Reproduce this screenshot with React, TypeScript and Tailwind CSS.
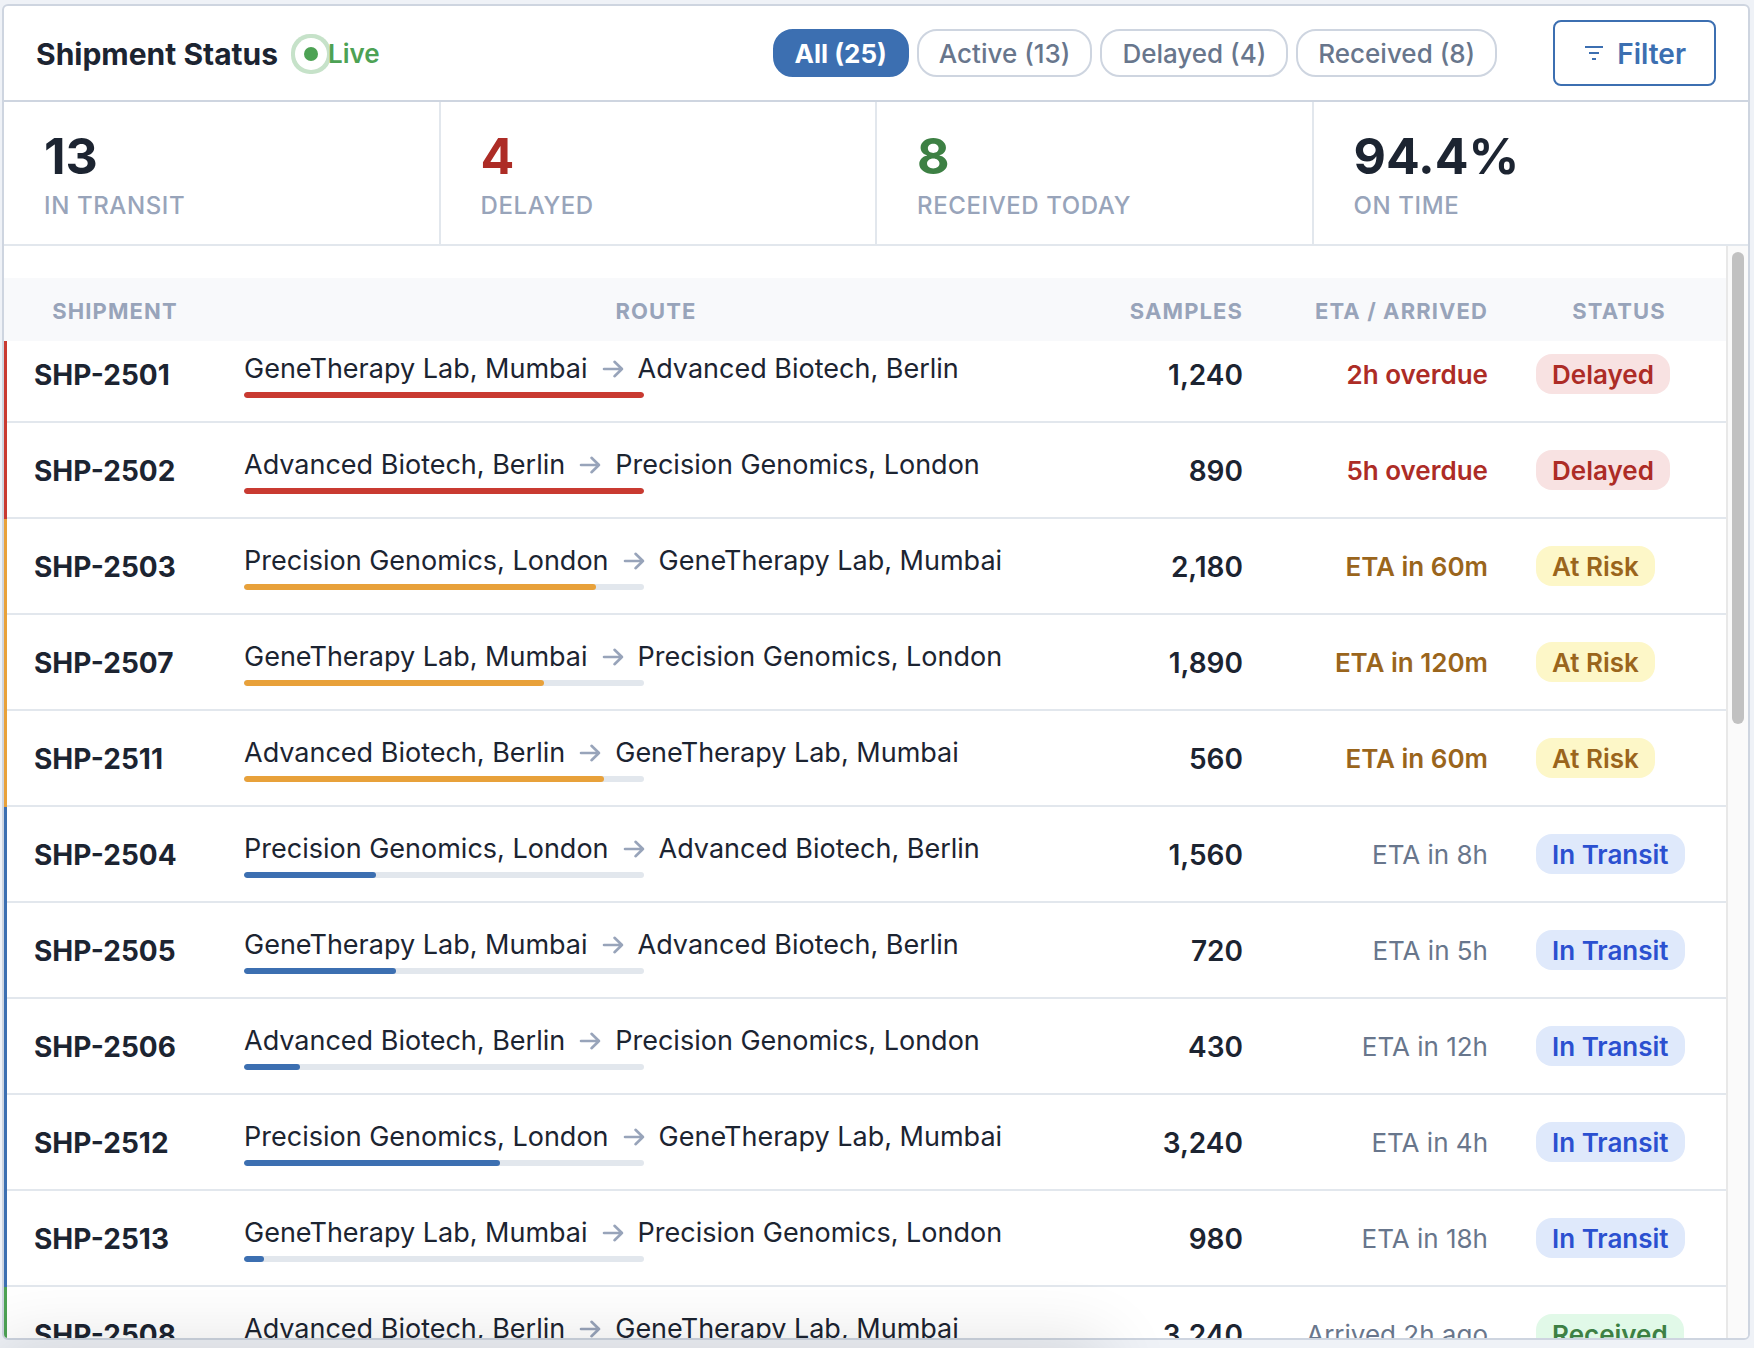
import React from "react";

type Tone = "delayed" | "risk" | "transit" | "received";

type Shipment = {
  id: string;
  from: string;
  to: string;
  samples: string;
  eta: string;
  tone: Tone;
  progress: number;
};

const MUMBAI = "GeneTherapy Lab, Mumbai";
const BERLIN = "Advanced Biotech, Berlin";
const LONDON = "Precision Genomics, London";

const shipments: Shipment[] = [
  { id: "SHP-2501", from: MUMBAI, to: BERLIN, samples: "1,240", eta: "2h overdue", tone: "delayed", progress: 100 },
  { id: "SHP-2502", from: BERLIN, to: LONDON, samples: "890", eta: "5h overdue", tone: "delayed", progress: 100 },
  { id: "SHP-2503", from: LONDON, to: MUMBAI, samples: "2,180", eta: "ETA in 60m", tone: "risk", progress: 88 },
  { id: "SHP-2507", from: MUMBAI, to: LONDON, samples: "1,890", eta: "ETA in 120m", tone: "risk", progress: 75 },
  { id: "SHP-2511", from: BERLIN, to: MUMBAI, samples: "560", eta: "ETA in 60m", tone: "risk", progress: 90 },
  { id: "SHP-2504", from: LONDON, to: BERLIN, samples: "1,560", eta: "ETA in 8h", tone: "transit", progress: 33 },
  { id: "SHP-2505", from: MUMBAI, to: BERLIN, samples: "720", eta: "ETA in 5h", tone: "transit", progress: 38 },
  { id: "SHP-2506", from: BERLIN, to: LONDON, samples: "430", eta: "ETA in 12h", tone: "transit", progress: 14 },
  { id: "SHP-2512", from: LONDON, to: MUMBAI, samples: "3,240", eta: "ETA in 4h", tone: "transit", progress: 64 },
  { id: "SHP-2513", from: MUMBAI, to: LONDON, samples: "980", eta: "ETA in 18h", tone: "transit", progress: 5 },
  { id: "SHP-2508", from: BERLIN, to: MUMBAI, samples: "3,240", eta: "Arrived 2h ago", tone: "received", progress: 100 },
];

const tones: Record<Tone, { label: string; edge: string; bar: string; badge: string; eta: string }> = {
  delayed: {
    label: "Delayed",
    edge: "before:bg-[#c93a31]",
    bar: "bg-[#c93a31]",
    badge: "bg-[#f8e2e2] text-[#ad2c26]",
    eta: "font-semibold text-[#ad2c26]",
  },
  risk: {
    label: "At Risk",
    edge: "before:bg-[#e8a13a]",
    bar: "bg-[#e8a13a]",
    badge: "bg-[#fdf7c8] text-[#9a651c]",
    eta: "font-semibold text-[#9a651c]",
  },
  transit: {
    label: "In Transit",
    edge: "before:bg-[#3c6fb1]",
    bar: "bg-[#3c6fb1]",
    badge: "bg-[#dfe9fb] text-[#2b50d0]",
    eta: "text-[#68768c]",
  },
  received: {
    label: "Received",
    edge: "before:bg-[#4da254]",
    bar: "bg-[#4da254]",
    badge: "bg-[#e1f9e8] text-[#3d8044]",
    eta: "text-[#68768c]",
  },
};

const filters = ["All (25)", "Active (13)", "Delayed (4)", "Received (8)"];

const stats = [
  { value: "13", label: "In Transit", color: "text-[#1c2431]" },
  { value: "4", label: "Delayed", color: "text-[#ad2c26]" },
  { value: "8", label: "Received Today", color: "text-[#3d8044]" },
  { value: "94.4%", label: "On Time", color: "text-[#1c2431]" },
];

function FilterIcon() {
  return (
    <svg viewBox="0 0 24 24" className="size-6" fill="currentColor" aria-hidden="true">
      <path d="M9 18h4v-2H9zM2 4v2h18V4zm4 8h10v-2H6z" />
    </svg>
  );
}

function ArrowIcon() {
  return (
    <svg
      viewBox="0 0 24 24"
      className="size-6 text-[#98a4ba]"
      fill="none"
      stroke="currentColor"
      strokeWidth="2.6"
      strokeLinecap="round"
      strokeLinejoin="round"
      aria-hidden="true"
    >
      <path d="M3 12h18M13.500 4.800l7.500 7.200-7.500 7.200" />
    </svg>
  );
}

function Header() {
  const [active, setActive] = React.useState(filters[0]);
  return (
    <header className="flex items-center justify-between border-b-2 border-[#ced5e0] px-8 py-3.5">
      <div className="flex items-center pt-0.5">
        <h1 className="text-[30px] leading-9 font-bold">Shipment Status</h1>
        <span className="ml-[26px] size-3.5 rounded-full bg-[#4da254] shadow-[0_0_0_9px_#ffffff,0_0_0_13px_#c6e2c9]" />
        <span className="relative ml-2.5 text-[26px] leading-8 font-semibold text-[#4da254]">Live</span>
      </div>
      <div className="flex items-center">
        <div className="flex gap-2">
          {filters.map((name) => (
            <button
              key={name}
              type="button"
              aria-pressed={name === active}
              onClick={() => setActive(name)}
              className={
                name === active
                  ? "h-12 rounded-[20px] border-2 border-[#3c6fb1] bg-[#3c6fb1] px-5 pt-0.5 text-[26px] leading-8 font-bold text-white"
                  : "h-12 rounded-[20px] border-2 border-[#ced5e0] px-5 pt-0.5 text-[26px] leading-8 font-medium text-[#68768c]"
              }
            >
              {name}
            </button>
          ))}
        </div>
        <button
          type="button"
          className="ml-14 flex h-[66px] items-center gap-2.5 rounded-lg border-2 border-[#3c6fb1] px-7 pt-0.5 text-[28px] leading-8 font-semibold text-[#3c6fb1]"
        >
          <FilterIcon />
          Filter
        </button>
      </div>
    </header>
  );
}

function Stats() {
  return (
    <dl className="grid grid-cols-4 gap-0.5 border-b-2 border-[#e2e7ed] bg-[#e2e7ed]">
      {stats.map((s) => (
        <div key={s.label} className="flex h-[142px] flex-col-reverse justify-center gap-1 bg-white px-10 pt-0.5">
          <dt className="text-2xl leading-8 font-medium tracking-wide text-[#98a4ba] uppercase">{s.label}</dt>
          <dd className={"text-[50px] leading-[60px] font-bold " + s.color}>{s.value}</dd>
        </div>
      ))}
    </dl>
  );
}

function ShipmentTable() {
  return (
    <table className="mt-8 w-full table-fixed border-collapse">
      <colgroup>
        <col className="w-[216px]" />
        <col />
        <col className="w-[175px]" />
        <col className="w-[245px]" />
        <col className="w-[214px]" />
      </colgroup>
      <thead className="bg-[#f8f9fb] text-[22px] leading-8 text-[#98a4ba] uppercase">
        <tr className="h-[63px]">
          <th className="pt-0.5 pr-6 pl-[30px] font-bold tracking-wider">Shipment</th>
          <th className="px-6 pt-0.5 font-bold tracking-wider">Route</th>
          <th className="px-6 pt-0.5 text-right font-bold tracking-wider">Samples</th>
          <th className="px-6 pt-0.5 text-right font-bold tracking-wider">ETA / Arrived</th>
          <th className="px-6 pt-0.5 font-bold tracking-wider">Status</th>
        </tr>
      </thead>
      <tbody className="whitespace-nowrap">
        {shipments.map((s) => {
          const tone = tones[s.tone];
          return (
            <tr key={s.id} className="group border-b-2 border-[#e2e7ed]">
              <td
                className={
                  "relative pt-0.5 pr-6 pl-[30px] text-[28px] leading-8 font-bold group-first:pb-3.5 before:absolute before:top-0 before:-bottom-0.5 before:left-0 before:w-[3px] " +
                  tone.edge
                }
              >
                {s.id}
              </td>
              <td className="px-6 py-[23px] group-first:pt-[9px]">
                <div className="flex items-center gap-[13px] text-[27px] leading-[38px]">
                  <span>{s.from}</span>
                  <ArrowIcon />
                  <span>{s.to}</span>
                </div>
                <div className="mt-1 h-1.5 w-[400px] overflow-hidden rounded-full bg-[#e2e7ed]">
                  <div className={"h-full rounded-full " + tone.bar} style={{ width: `${s.progress}%` }} />
                </div>
              </td>
              <td className="px-6 pt-0.5 text-right text-[28px] leading-8 font-semibold group-first:pb-3.5">
                {s.samples}
              </td>
              <td className={"px-6 pt-0.5 text-right text-[26px] leading-8 group-first:pb-3.5 " + tone.eta}>{s.eta}</td>
              <td className="px-6 group-first:pb-3.5">
                <span
                  className={
                    "inline-flex h-10 items-center rounded-2xl px-4 pt-0.5 align-middle text-[26px] leading-8 font-semibold " +
                    tone.badge
                  }
                >
                  {tone.label}
                </span>
              </td>
            </tr>
          );
        })}
      </tbody>
    </table>
  );
}

export default function App() {
  return (
    <div className="relative h-screen overflow-hidden bg-[#eff2f7] pt-1 pr-1 pb-2 pl-0.5 font-['Inter',sans-serif] text-[#1c2431]">
      <main className="flex h-full flex-col overflow-hidden rounded-md border-2 border-[#ced5e0] bg-white">
        <Header />
        <Stats />
        <div className="flex min-h-0 flex-1">
          <section className="min-w-0 flex-1 overflow-hidden" aria-label="Shipments">
            <ShipmentTable />
          </section>
          <div className="w-[22px] border-l-2 border-[#e8e8e8] bg-[#fafafa] pt-1.5 pl-1" aria-hidden="true">
            <div className="h-[472px] w-3 rounded-full bg-[#c1c1c1]" />
          </div>
        </div>
      </main>
      <div className="pointer-events-none absolute top-full left-0 h-20 w-[1100px] shadow-[0_0_70px_6px_rgba(0,0,0,0.12)]" />
    </div>
  );
}
